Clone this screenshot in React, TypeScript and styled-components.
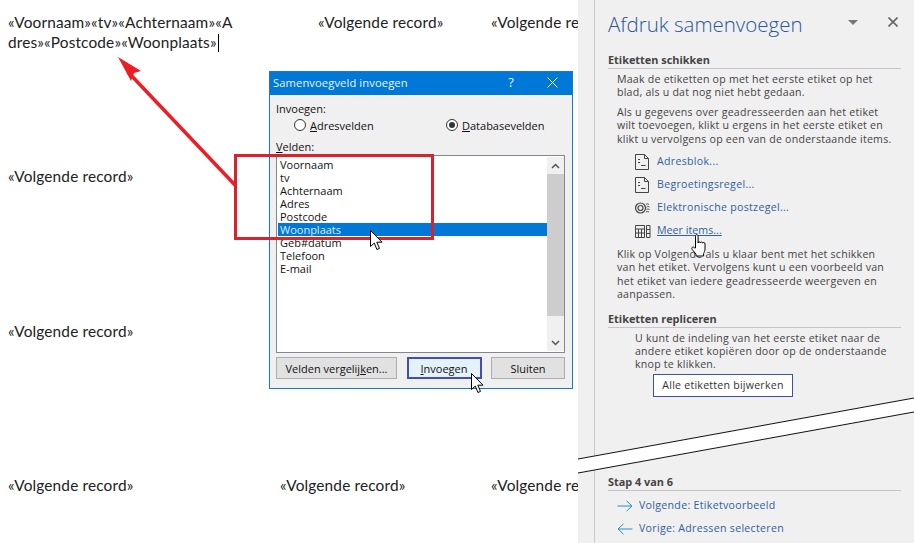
import React from "react";
import styled, { createGlobalStyle } from "styled-components";

const Global = createGlobalStyle`
  html, body { margin: 0; padding: 0; background: #fff; }
  #root { width: 914px; height: 543px; overflow: hidden; }
`;

const Page = styled.div`
  position: relative;
  display: flex;
  width: 914px;
  height: 543px;
  overflow: hidden;
`;

/* ---------- document ---------- */
const Doc = styled.div`
  width: 578px;
  height: 543px;
  flex: none;
  overflow: hidden;
  display: grid;
  grid-template-columns: 272px 211px 95px;
  grid-template-rows: 154px 155px 154px 80px;
  padding: 12px 0 0 8px;
  box-sizing: border-box;
  font: 15.4px/20px Lato, "Liberation Sans", sans-serif;
  letter-spacing: 0.15px;
  color: #222;
`;
const Cell = styled.div<{ $inset?: number }>`
  white-space: nowrap;
  padding-left: ${(p) => p.$inset ?? 0}px;
`;
const Caret = styled.span`
  display: inline-block;
  width: 1px;
  height: 18px;
  background: #000;
  vertical-align: -4px;
  margin-left: 1px;
`;

/* ---------- dialog ---------- */
const Dialog = styled.div`
  position: absolute;
  left: 269px;
  top: 71px;
  width: 304px;
  height: 318px;
  box-sizing: border-box;
  border: 1px solid #1a78c8;
  background: #f0f0f0;
  font: 11px/13px "Open Sans", "Liberation Sans", sans-serif;
  color: #111;
  display: flex;
  flex-direction: column;
`;
const TitleBar = styled.div`
  height: 23px;
  flex: none;
  background: #0078d7;
  color: #eaf4fc;
  display: flex;
  align-items: center;
  padding: 0 14px 2px 3px;
  box-sizing: border-box;
  font-size: 11.2px;
  letter-spacing: 0.1px;
`;
const TitleText = styled.span`
  flex: 1;
`;
const Help = styled.span`
  font-size: 13px;
  margin-right: 33px;
`;
const DialogBody = styled.div`
  flex: 1;
  display: flex;
  flex-direction: column;
  padding: 7px 7px 0 6px;
`;
const RadioRow = styled.div`
  display: grid;
  grid-template-columns: 152px 1fr;
  padding: 1px 0 0 18px;
  height: 18px;
`;
const RadioItem = styled.label`
  display: flex;
  align-items: center;
  gap: 4px;
`;
const RadioDot = styled.span<{ $on?: boolean }>`
  width: 12px;
  height: 12px;
  box-sizing: border-box;
  border: 1px solid #333;
  border-radius: 50%;
  background: #fff;
  display: flex;
  align-items: center;
  justify-content: center;
  &::after {
    content: "";
    width: 6px;
    height: 6px;
    border-radius: 50%;
    background: ${(p) => (p.$on ? "#333" : "transparent")};
  }
`;
const FieldsLabel = styled.div`
  margin-top: 6px;
  height: 15px;
`;
const ListBox = styled.div`
  height: 198px;
  box-sizing: border-box;
  border: 1px solid #828790;
  background: #fff;
  display: flex;
  padding: 1px 0 1px 1px;
`;
const Rows = styled.div`
  flex: 1;
  padding-top: 1px;
`;
const Row = styled.div<{ $sel?: boolean }>`
  height: 13px;
  line-height: 13px;
  padding-left: 2px;
  background: ${(p) => (p.$sel ? "#0078d7" : "transparent")};
  color: ${(p) => (p.$sel ? "#dcecf8" : "#111")};
`;
const Scroll = styled.div`
  width: 17px;
  flex: none;
  background: #f0f0f0;
  display: flex;
  flex-direction: column;
  align-items: center;
`;
const ScrollBtn = styled.div`
  height: 17px;
  flex: none;
  display: flex;
  align-items: center;
  justify-content: center;
`;
const Thumb = styled.div`
  width: 100%;
  height: 142px;
  background: #cdcdcd;
`;
const ScrollGap = styled.div`
  flex: 1;
`;
const ButtonRow = styled.div`
  display: flex;
  justify-content: space-between;
  margin-top: 4px;
`;
const DlgButton = styled.div<{ $w: number; $focus?: boolean }>`
  width: ${(p) => p.$w}px;
  height: 22px;
  box-sizing: border-box;
  border: ${(p) => (p.$focus ? "2px solid #3f4fb5" : "1px solid #adadad")};
  background: ${(p) => (p.$focus ? "#e5f1fb" : "#e1e1e1")};
  display: flex;
  align-items: center;
  justify-content: center;
`;

/* ---------- task pane ---------- */
const Pane = styled.div`
  width: 336px;
  height: 543px;
  flex: none;
  background: #f0f0f0;
  padding-left: 16px;
  box-sizing: border-box;
`;
const PaneInner = styled.div`
  height: 100%;
  box-sizing: border-box;
  border-left: 1px solid #c9c9c9;
  padding: 0 13px 0 13px;
  display: flex;
  flex-direction: column;
  font: 10.6px/13.4px "Open Sans", "Liberation Sans", sans-serif;
  letter-spacing: 0.23px;
  color: #444;
`;
const PaneHead = styled.div`
  display: flex;
  align-items: center;
  height: 50px;
  padding-right: 3px;
`;
const PaneTitle = styled.div`
  flex: 1;
  font: 300 20.5px/26px "Open Sans", "Liberation Sans", sans-serif;
  letter-spacing: 0;
  color: #2b5797;
  margin-bottom: 2px;
`;
const DropIcon = styled.span`
  width: 0;
  height: 0;
  border-left: 5px solid transparent;
  border-right: 5px solid transparent;
  border-top: 5px solid #777;
  margin: 0 30px 6px 0;
`;
const CloseWrap = styled.span`
  display: flex;
  margin-bottom: 6px;
`;
const Heading = styled.div<{ $top?: number }>`
  font-weight: 700;
  font-size: 10.9px;
  line-height: 15px;
  letter-spacing: 0;
  color: #444;
  border-bottom: 1px solid #c6c6c6;
  padding-bottom: 1px;
  margin-top: ${(p) => p.$top ?? 2}px;
`;
const Para = styled.p<{ $top?: number; $left?: number }>`
  margin: ${(p) => p.$top ?? 5}px 0 0 ${(p) => p.$left ?? 9}px;
  white-space: nowrap;
`;
const Links = styled.div`
  margin: 8px 0 0 27px;
  display: flex;
  flex-direction: column;
  gap: 7px;
`;
const LinkRow = styled.div`
  display: flex;
  align-items: center;
  gap: 6px;
  height: 16px;
  color: #31619c;
  letter-spacing: 0.3px;
`;
const IconBox = styled.span`
  width: 16px;
  height: 16px;
  flex: none;
  display: flex;
`;
const Under = styled.span`
  text-decoration: underline;
  letter-spacing: 0.05px;
`;
const UpdateBtn = styled.div`
  margin: 2px 0 0 45px;
  width: 140px;
  height: 23px;
  box-sizing: border-box;
  border: 1px solid #3f4fa5;
  background: #fff;
  color: #333;
  display: flex;
  align-items: center;
  justify-content: center;
`;
const Footer = styled.div`
  margin-top: auto;
  padding-bottom: 6px;
`;
const NavLinks = styled.div`
  margin: 7px 0 0 9px;
  display: flex;
  flex-direction: column;
  gap: 7px;
`;

/* ---------- overlays ---------- */
const Overlay = styled.svg`
  position: absolute;
  left: 0;
  top: 0;
  pointer-events: none;
`;
const CursorPos = styled.svg<{ $x: number; $y: number }>`
  position: absolute;
  left: ${(p) => p.$x}px;
  top: ${(p) => p.$y}px;
  pointer-events: none;
`;

const Arrow = ({ x, y }: { x: number; y: number }) => (
  <CursorPos $x={x} $y={y} width="13" height="21" viewBox="0 0 13 21">
    <path
      d="M.5.5v16l3.8-3.4 2.6 6.4 2.6-1.1-2.7-6.2h5.2z"
      fill="#fff"
      stroke="#000"
      strokeWidth="1"
    />
  </CursorPos>
);

const Hand = ({ x, y }: { x: number; y: number }) => (
  <CursorPos $x={x} $y={y} width="17" height="23" viewBox="0 0 17 23">
    <path
      d="M4.5 14V2.2c0-2 2.6-2 2.6 0V9c0-1.5 2.2-1.5 2.3 0 0-1.3 2.2-1.3 2.3.2 .2-1.2 2.3-1 2.3.6v5.2c0 2-.8 3-1.4 4.5V22H5v-2L1.2 15.500c-1.300-2 1-3.300 2.200-1.700z"
      fill="#fff"
      stroke="#000"
      strokeWidth="1"
    />
  </CursorPos>
);

const DocIcon = () => (
  <svg width="16" height="16" viewBox="0 0 16 16" fill="none" stroke="#444" strokeWidth="1">
    <path d="M.5.5h9l4 4v11H.5zM9.500.5v4h4" />
    <path d="M3 5.500h2M3 8.500h2M6 11.500h4.500" />
  </svg>
);
const StampIcon = () => (
  <svg width="16" height="16" viewBox="0 0 16 16" fill="none" stroke="#444" strokeWidth="1.200">
    <circle cx="5.500" cy="8" r="5" />
    <circle cx="5.500" cy="8" r="2.500" />
    <path d="M11 4.500c1-.8 2-.8 3 0M11.500 7c1-.6 2-.6 3 0M11.500 9.500c1-.6 2-.6 3 0M11 12c1-.6 2-.6 3 0" strokeWidth="1" />
  </svg>
);
const TableIcon = () => (
  <svg width="16" height="16" viewBox="0 0 16 16" fill="none" stroke="#444" strokeWidth="1">
    <path d="M.5 2.500h9v12h-9zM.5 6h9M.5 10h9M3.500 6v8.500M6.500 6v8.500" />
    <path d="M11.500 2.500h3.500v12h-3.500zM11.500 6.500h3.500M11.500 10.500h3.500" />
  </svg>
);
const NavArrow = ({ left }: { left?: boolean }) => (
  <svg width="16" height="12" viewBox="0 0 16 12" fill="none" stroke="#2e8bc9" strokeWidth="1">
    {left ? <path d="M15.500 6H1M6.500.8L1 6l5.500 5.200" /> : <path d="M.5 6H15M9.500.8L15 6l-5.500 5.200" />}
  </svg>
);

const fields = ["Voornaam", "tv", "Achternaam", "Adres", "Postcode", "Woonplaats", "Geb#datum", "Telefoon", "E-mail"];

export default function App() {
  return (
    <Page>
      <Global />
      <Doc>
        <Cell>
          «Voornaam»«tv»«Achternaam»«A
          <br />
          dres»«Postcode»«Woonplaats»
          <Caret />
        </Cell>
        <Cell $inset={38}>«Volgende record»</Cell>
        <Cell>«Volgende record»</Cell>
        <Cell>«Volgende record»</Cell>
        <Cell />
        <Cell />
        <Cell>«Volgende record»</Cell>
        <Cell />
        <Cell />
        <Cell>«Volgende record»</Cell>
        <Cell>«Volgende record»</Cell>
        <Cell>«Volgende record»</Cell>
      </Doc>

      <Pane>
        <PaneInner>
          <PaneHead>
            <PaneTitle>Afdruk samenvoegen</PaneTitle>
            <DropIcon />
            <CloseWrap>
              <svg width="10" height="10" viewBox="0 0 10 10" stroke="#666" strokeWidth="1.600">
                <path d="M.5.500l9 9M9.500.500l-9 9" />
              </svg>
            </CloseWrap>
          </PaneHead>
          <Heading>Etiketten schikken</Heading>
          <Para $top={4}>
            Maak de etiketten op met het eerste etiket op het
            <br />
            blad, als u dat nog niet hebt gedaan.
          </Para>
          <Para $top={6}>
            Als u gegevens over geadresseerden aan het etiket
            <br />
            wilt toevoegen, klikt u ergens in het eerste etiket en
            <br />
            klikt u vervolgens op een van de onderstaande items.
          </Para>
          <Links>
            <LinkRow><IconBox><DocIcon /></IconBox>Adresblok...</LinkRow>
            <LinkRow><IconBox><DocIcon /></IconBox>Begroetingsregel...</LinkRow>
            <LinkRow><IconBox><StampIcon /></IconBox>Elektronische postzegel...</LinkRow>
            <LinkRow><IconBox><TableIcon /></IconBox><Under>Meer items...</Under></LinkRow>
          </Links>
          <Para $top={9}>
            Klik op Volgende als u klaar bent met het schikken
            <br />
            van het etiket. Vervolgens kunt u een voorbeeld van
            <br />
            het etiket van iedere geadresseerde weergeven en
            <br />
            aanpassen.
          </Para>
          <Heading $top={9}>Etiketten repliceren</Heading>
          <Para $top={4} $left={27}>
            U kunt de indeling van het eerste etiket naar de
            <br />
            andere etiket kopiëren door op de onderstaande
            <br />
            knop te klikken.
          </Para>
          <UpdateBtn>Alle etiketten bijwerken</UpdateBtn>
          <Footer>
            <Heading>Stap 4 van 6</Heading>
            <NavLinks>
              <LinkRow><NavArrow />Volgende: Etiketvoorbeeld</LinkRow>
              <LinkRow><NavArrow left />Vorige: Adressen selecteren</LinkRow>
            </NavLinks>
          </Footer>
        </PaneInner>
      </Pane>

      <Overlay width="914" height="543" viewBox="0 0 914 543">
        <path d="M578 459L914 398V412L578 473Z" fill="#fff" />
        <path d="M578 459L914 398M578 473L914 412" stroke="#111" strokeWidth="1" fill="none" />
      </Overlay>

      <Dialog>
        <TitleBar>
          <TitleText>Samenvoegveld invoegen</TitleText>
          <Help>?</Help>
          <svg width="11" height="11" viewBox="0 0 11 11" stroke="#eaf4fc" strokeWidth="1">
            <path d="M.5.500l10 10M10.500.500l-10 10" />
          </svg>
        </TitleBar>
        <DialogBody>
          <div>Invoegen:</div>
          <RadioRow>
            <RadioItem><RadioDot /><span><u>A</u>dresvelden</span></RadioItem>
            <RadioItem><RadioDot $on /><span><u>D</u>atabasevelden</span></RadioItem>
          </RadioRow>
          <FieldsLabel><u>V</u>elden:</FieldsLabel>
          <ListBox>
            <Rows>
              {fields.map((f) => (
                <Row key={f} $sel={f === "Woonplaats"}>{f}</Row>
              ))}
            </Rows>
            <Scroll>
              <ScrollBtn>
                <svg width="9" height="6" viewBox="0 0 9 6" fill="none" stroke="#555" strokeWidth="1.500">
                  <path d="M1 5l3.500-3.500L8 5" />
                </svg>
              </ScrollBtn>
              <Thumb />
              <ScrollGap />
              <ScrollBtn>
                <svg width="9" height="6" viewBox="0 0 9 6" fill="none" stroke="#555" strokeWidth="1.500">
                  <path d="M1 1l3.500 3.500L8 1" />
                </svg>
              </ScrollBtn>
            </Scroll>
          </ListBox>
          <ButtonRow>
            <DlgButton $w={121}><span>Velden vergelij<u>k</u>en...</span></DlgButton>
            <DlgButton $w={75} $focus><span><u>I</u>nvoegen</span></DlgButton>
            <DlgButton $w={74}>Sluiten</DlgButton>
          </ButtonRow>
        </DialogBody>
      </Dialog>

      <Overlay width="914" height="543" viewBox="0 0 914 543">
        <rect x="235.500" y="155.500" width="197" height="83" fill="none" stroke="#d8232f" strokeWidth="3" />
        <path d="M235 185L128 72" stroke="#ee1c25" strokeWidth="3.500" fill="none" />
        <path d="M118 57L141 71L134 73L131 81Z" fill="#ee1c25" />
      </Overlay>
      <Arrow x={370} y={230} />
      <Arrow x={471} y={373} />
      <Hand x={691} y={234} />
    </Page>
  );
}
